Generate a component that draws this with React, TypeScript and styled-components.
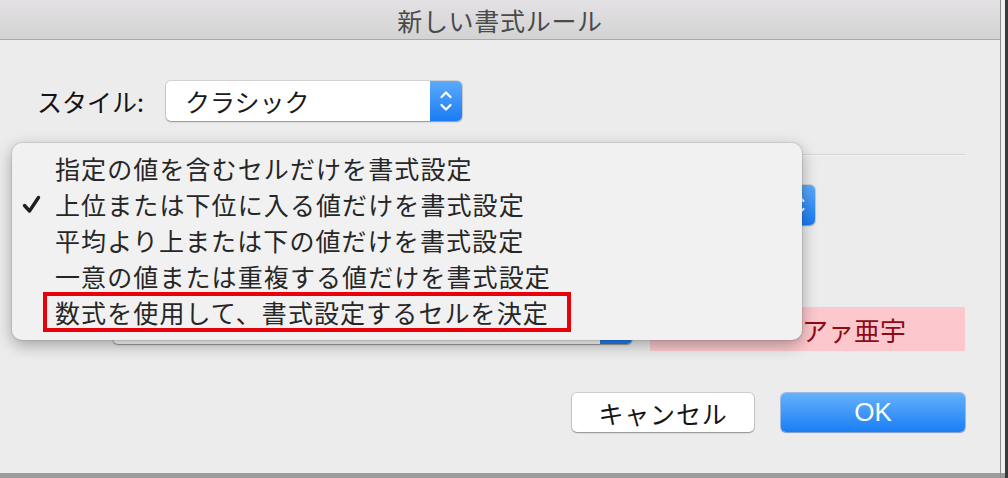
import React from 'react';
import styled, { createGlobalStyle } from 'styled-components';

const Global = createGlobalStyle`
  html, body { margin: 0; padding: 0; background: #e6e6e6; }
  body {
    width: 1008px; height: 478px; overflow: hidden;
    font-family: "Noto Sans CJK JP", "Noto Sans", sans-serif;
  }
`;

const Screen = styled.div`
  width: 1008px;
  height: 478px;
  display: flex;
  background: linear-gradient(to bottom, #f0f0f0 0, #f0f0f0 473px, #9c9c9c 473px);
  overflow: hidden;
`;

const RightEdge = styled.div`
  flex: 1;
  border-left: 1px solid #8e8e8e;
  box-shadow: inset -3px 0 0 #3a3a3a;
`;

const Window = styled.div`
  position: relative;
  width: 1000px;
  height: 473px;
  background: #ececec;
  display: flex;
  flex-direction: column;
  border-bottom-right-radius: 5px;
`;

const TitleBar = styled.div`
  height: 39px;
  border-bottom: 1px solid #a9a9a9;
  background: linear-gradient(#e4e1e4, #d3d3d3);
  display: flex;
  align-items: center;
  justify-content: center;
  font-size: 25px;
  letter-spacing: 0.7px;
  color: #4a4a4a;
`;

const Body = styled.div`
  flex: 1;
  display: flex;
  flex-direction: column;
  padding: 41px 35px 0 37px;
`;

const Row = styled.div<{ $top: number }>`
  display: flex;
  align-items: center;
  margin-top: ${(p) => p.$top}px;
`;

const Label = styled.div<{ $width: number }>`
  width: ${(p) => p.$width}px;
  font-size: 25px;
  color: #141414;
  white-space: nowrap;
`;

const Select = styled.div<{ $width: number; $height: number; $indent?: number }>`
  display: flex;
  align-items: stretch;
  width: ${(p) => p.$width}px;
  height: ${(p) => p.$height}px;
  margin-left: ${(p) => p.$indent ?? 0}px;
  background: #fff;
  border-radius: 5px;
  box-shadow: 0 0 0 1px rgba(0, 0, 0, 0.1), 0 1px 1.5px rgba(0, 0, 0, 0.3);
`;

const SelectText = styled.div`
  flex: 1;
  display: flex;
  align-items: center;
  padding-left: 19px;
  font-size: 25px;
  color: #1a1a1a;
`;

const Stepper = styled.div`
  width: 32px;
  display: flex;
  align-items: center;
  justify-content: center;
  border-radius: 0 5px 5px 0;
  background: linear-gradient(#5caafc, #1a7cf4);
`;

const Separator = styled.div`
  margin-top: 33px;
  height: 1px;
  background: #d4d4d4;
  box-shadow: 0 1px 0 #f5f5f5;
`;

const Preview = styled.div`
  margin-left: 18px;
  width: 315px;
  height: 44px;
  background: #fcc8cd;
  display: flex;
  align-items: center;
  padding-left: 152px;
  box-sizing: border-box;
  font-family: "Liberation Serif", "Noto Sans CJK JP", serif;
  font-size: 26px;
  color: #8e0a14;
`;

const ButtonRow = styled.div`
  display: flex;
  justify-content: flex-end;
  gap: 27px;
  margin-top: 42px;
`;

const Button = styled.div<{ $primary?: boolean; $width: number }>`
  width: ${(p) => p.$width}px;
  height: 39px;
  border-radius: 5px;
  display: flex;
  align-items: center;
  justify-content: center;
  font-family: ${(p) => (p.$primary ? '"Liberation Sans", Arial, sans-serif' : '"Noto Sans CJK JP", sans-serif')};
  font-size: ${(p) => (p.$primary ? 26 : 25)}px;
  letter-spacing: ${(p) => (p.$primary ? 0 : 0.8)}px;
  color: ${(p) => (p.$primary ? '#ffffff' : '#141414')};
  background: ${(p) => (p.$primary ? 'linear-gradient(#65b1fc, #1a7ef5)' : '#ffffff')};
  box-shadow: ${(p) =>
    p.$primary
      ? '0 0 0 1px rgba(20, 100, 220, 0.35), 0 1px 1px rgba(0,0,0,0.2)'
      : '0 0 0 1px rgba(0, 0, 0, 0.12), 0 1px 1.5px rgba(0, 0, 0, 0.3)'};
`;

const Menu = styled.div`
  position: absolute;
  left: 12px;
  top: 143px;
  width: 790px;
  padding: 7px 0 10px;
  background: #f1f1f1;
  border-radius: 10px;
  box-shadow: 0 0 0 1px rgba(0, 0, 0, 0.08), 0 5px 16px rgba(0, 0, 0, 0.32);
`;

const MenuItem = styled.div`
  position: relative;
  height: 36px;
  display: flex;
  align-items: center;
  padding-left: 43px;
  font-size: 25px;
  letter-spacing: 1.1px;
  color: #262626;
  white-space: nowrap;
`;

const Check = styled.svg`
  position: absolute;
  left: 10px;
  top: 9px;
`;

const RedFrame = styled.div`
  position: absolute;
  left: 31px;
  top: -2px;
  width: 520px;
  height: 32px;
  border: 4px solid #e8000b;
`;

const Chevrons = () => (
  <svg width="14" height="26" viewBox="0 0 14 26" fill="none">
    <path d="M2.5 9 L7 4.5 L11.5 9" stroke="#fff" strokeWidth="2.2" strokeLinecap="round" strokeLinejoin="round" />
    <path d="M2.5 17 L7 21.5 L11.5 17" stroke="#fff" strokeWidth="2.2" strokeLinecap="round" strokeLinejoin="round" />
  </svg>
);

const items = [
  '指定の値を含むセルだけを書式設定',
  '上位または下位に入る値だけを書式設定',
  '平均より上または下の値だけを書式設定',
  '一意の値または重複する値だけを書式設定',
  '数式を使用して、書式設定するセルを決定',
];

export default function App() {
  return (
    <>
      <Global />
      <Screen>
        <Window>
          <TitleBar>新しい書式ルール</TitleBar>
          <Body>
            <Row $top={0}>
              <Label $width={129}>スタイル:</Label>
              <Select $width={296} $height={40}>
                <SelectText>クラシック</SelectText>
                <Stepper>
                  <Chevrons />
                </Stepper>
              </Select>
            </Row>
            <Separator />
            <Row $top={30}>
              <Select $width={649} $height={40} $indent={129}>
                <SelectText />
                <Stepper>
                  <Chevrons />
                </Stepper>
              </Select>
            </Row>
            <Row $top={82}>
              <Label $width={76} />
              <Select $width={519} $height={30}>
                <SelectText />
                <Stepper>
                  <Chevrons />
                </Stepper>
              </Select>
              <Preview>アァ亜宇</Preview>
            </Row>
            <ButtonRow>
              <Button $width={182}>キャンセル</Button>
              <Button $width={184} $primary>
                OK
              </Button>
            </ButtonRow>
          </Body>
          <Menu>
            {items.map((t, i) => (
              <MenuItem key={t}>
                {i === 1 && (
                  <Check width="19" height="19" viewBox="0 0 19 19" fill="none">
                    <path d="M2.5 10.5 L7.5 16 L16.5 2.5" stroke="#1f1f1f" strokeWidth="3.4" strokeLinecap="round" strokeLinejoin="round" />
                  </Check>
                )}
                {i === 4 && <RedFrame />}
                {t}
              </MenuItem>
            ))}
          </Menu>
        </Window>
        <RightEdge />
      </Screen>
    </>
  );
}
